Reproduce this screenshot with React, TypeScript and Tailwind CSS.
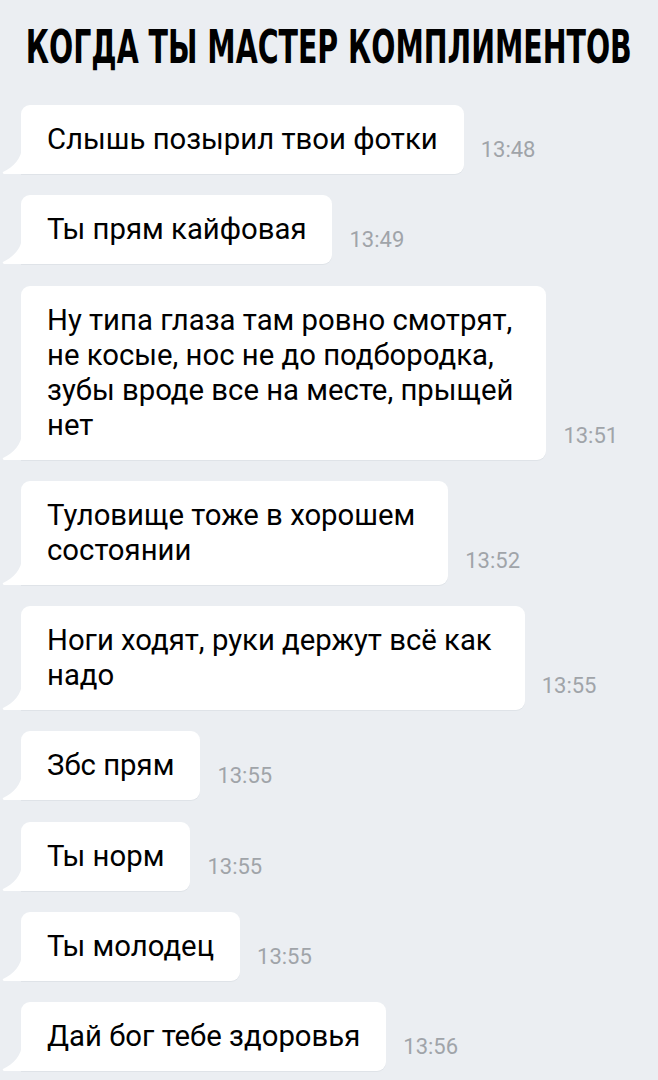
import React from "react";

type Msg = { lines: string[]; time: string };

const msgs: Msg[] = [
  { lines: ["Слышь позырил твои фотки"], time: "13:48" },
  { lines: ["Ты прям кайфовая"], time: "13:49" },
  {
    lines: [
      "Ну типа глаза там ровно смотрят,",
      "не косые, нос не до подбородка,",
      "зубы вроде все на месте, прыщей",
      "нет",
    ],
    time: "13:51",
  },
  { lines: ["Туловище тоже в хорошем", "состоянии"], time: "13:52" },
  { lines: ["Ноги ходят, руки держут всё как", "надо"], time: "13:55" },
  { lines: ["Збс прям"], time: "13:55" },
  { lines: ["Ты норм"], time: "13:55" },
  { lines: ["Ты молодец"], time: "13:55" },
  { lines: ["Дай бог тебе здоровья"], time: "13:56" },
];

function Tail() {
  return (
    <svg
      className="absolute bottom-0 left-[-19px]"
      width="20"
      height="28"
      viewBox="0 0 20 28"
    >
      <path d="M20 0 C20 13 11 21 1 26 Q0 27.5 2.5 28 L20 28 Z" fill="#ffffff" />
    </svg>
  );
}

export default function App() {
  return (
    <div
      className="w-[658px] h-[1080px] overflow-hidden bg-[#ebeef2]"
      style={{ fontFamily: "Roboto, 'Liberation Sans', sans-serif" }}
    >
      <div className="h-[105px] pt-[25px] flex justify-center">
        <span
          className="inline-block whitespace-nowrap text-[47px] leading-[44px] font-bold text-black scale-x-[0.605]"
          style={{ fontFamily: "'DejaVu Sans', sans-serif" }}
        >
          КОГДА ТЫ МАСТЕР КОМПЛИМЕНТОВ
        </span>
      </div>
      <div className="flex flex-col gap-[21.3px] pl-[21px]">
        {msgs.map((m, i) => (
          <div key={i} className="flex items-end">
            <div
              className={
                m.lines.length > 1
                  ? "relative bg-white rounded-[9px] rounded-bl-none pl-[26px] pr-[33px] py-[17px] text-[29.3px] leading-[35px] text-black shadow-[0_1px_0_#dfe3e8]"
                  : "relative bg-white rounded-[9px] rounded-bl-none px-[26px] py-[17px] text-[29.3px] leading-[35px] text-black shadow-[0_1px_0_#dfe3e8]"
              }
            >
              <Tail />
              {m.lines.map((l, j) => (
                <div key={j} className="whitespace-nowrap">
                  {l}
                </div>
              ))}
            </div>
            <div className="ml-[17px] mb-[13px] text-[22px] leading-[22px] text-[#a0a4a9]">
              {m.time}
            </div>
          </div>
        ))}
      </div>
    </div>
  );
}
